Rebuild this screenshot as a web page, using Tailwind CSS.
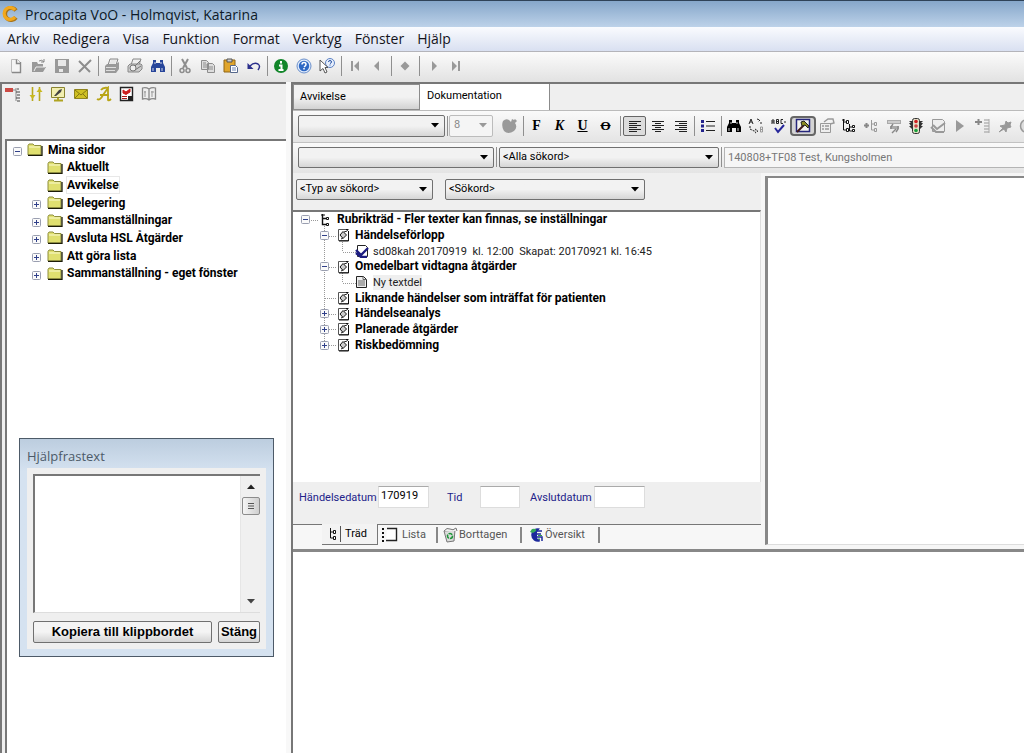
<!DOCTYPE html>
<html lang="sv">
<head>
<meta charset="utf-8">
<title>Procapita VoO - Holmqvist, Katarina</title>
<script src="https://cdn.jsdelivr.net/npm/@tailwindcss/browser@4"></script>
</head>
<body class="h-screen overflow-hidden flex flex-col bg-[#efefef] text-black text-[11px] font-[Roboto,'Liberation_Sans',sans-serif]">

<svg class="hidden">
  <symbol id="plus" viewBox="0 0 9 9"><rect x=".5" y=".5" width="8" height="8" rx="1" fill="#fafafa" stroke="#9a9fb0"/><path d="M2 4.500h5M4.500 2v5" stroke="#30408a"/></symbol>
  <symbol id="minus" viewBox="0 0 9 9"><rect x=".5" y=".5" width="8" height="8" rx="1" fill="#fafafa" stroke="#9a9fb0"/><path d="M2 4.500h5" stroke="#30408a"/></symbol>
  <symbol id="folder" viewBox="0 0 16 13"><path d="M1 12V2.500L2 1h4l1.500 1.500H14V12z" fill="#e0e070" stroke="#8f8f3c"/><path d="M2 4h11" stroke="#fafad0"/><path d="M1 12.500h14V3" fill="none" stroke="#1c1c08" stroke-width="1.300"/></symbol>
  <symbol id="heading" viewBox="0 0 13 14"><path d="M1.500 1.500h8l2 2v9h-10z" fill="#fff" stroke="#555"/><path d="M9 1.500h2.500M11.500 3v10H2" stroke="#111" fill="none"/><path d="M3 7l3-3.500L9.500 7 6 10.500z" fill="#ccc" stroke="#111"/><path d="M7 4l3-1M4 11l2-1" stroke="#222" fill="none"/></symbol>
  <symbol id="treeicon" viewBox="0 0 12 14"><path d="M2.500 1v10.500H6M2.500 5.500H6" fill="none" stroke="#111" stroke-width="1.400"/><path d="M1 2h4" stroke="#111"/><path d="M6.500 4.500h2v2h-2zM6.500 10.500h2v2h-2z" fill="#fff" stroke="#111"/></symbol>
  <symbol id="binoc" viewBox="0 0 16 16"><path d="M3 2h3v3h4V2h3v3l2 4v5h-5v-4H6v4H1V9l2-4z"/><path d="M3 10v3M12 10v3M5 4v2M11 4v2" stroke="#fff" stroke-width=".8"/></symbol>
  <symbol id="down" viewBox="0 0 8 5"><path d="M0 0h8L4 4.500z"/></symbol>
</svg>

<header class="h-[27px] shrink-0 flex items-center gap-[7px] pl-0.5 border-t border-[#2f4358] bg-linear-to-b from-[#86a7ca] to-[#bdd2e9]">
  <svg class="size-4" viewBox="0 0 16 16"><path d="M14 4.500A6 6 0 1 0 14 11.500" fill="none" stroke="#a8741a" stroke-width="4"/><path d="M13 4A6 6 0 1 0 13 11" fill="none" stroke="#f2a81d" stroke-width="3.200"/></svg>
  <h1 class="text-[14px] text-[#0d1a28] font-['Open_Sans','Noto_Sans',sans-serif]">Procapita VoO - Holmqvist, Katarina</h1>
</header>

<nav class="h-[25px] shrink-0 flex items-center gap-[13px] px-[7px] pb-0.5 text-[14px] text-[#14141c] font-['Open_Sans','Noto_Sans',sans-serif] bg-linear-to-b from-[#fafbfe] to-[#d9e0f1] border-b border-[#b4b4ba]">
  <button>Arkiv</button><button>Redigera</button><button>Visa</button><button>Funktion</button><button>Format</button><button>Verktyg</button><button>Fönster</button><button>Hjälp</button>
</nav>

<div role="toolbar" aria-label="Standard" class="h-[30px] shrink-0 flex items-center pl-1 pb-0.5 bg-linear-to-b from-[#fbfbfb] to-[#e2e2e2] [&_button]:w-[23px] [&_button]:flex [&_button]:justify-center [&_svg]:size-4 [&_i]:w-1 [&_i]:h-5 [&_i]:flex [&_i]:justify-center [&_i]:before:w-px [&_i]:before:bg-[#8f8f8f]">
  <button aria-label="Ny"><svg viewBox="0 0 16 16"><path d="M3.500 1.500h6l3 3v10h-9z" fill="#f4f4f4" stroke="#bbb"/><path d="M8.500 1.500v4h4M12.500 4v10.500H4" fill="none" stroke="#888" stroke-width="1.400"/></svg></button>
  <button aria-label="Öppna"><svg viewBox="0 0 16 16"><path d="M1 14V4h5l1 2h5v3h3l-3 5z" fill="#999"/><path d="M3 13l2-4h9" stroke="#eee" fill="none"/><path d="M8 3q3-2 5 1M13 1v3h-3" stroke="#888" fill="none"/></svg></button>
  <button aria-label="Spara"><svg viewBox="0 0 16 16"><path d="M1 1h14v14H1z" fill="#999"/><path d="M4 2h8v6H4zM5 11h6v3H5z" fill="#e8e8e8"/><path d="M9 11h2v3H9z" fill="#999"/></svg></button>
  <button aria-label="Ta bort"><svg viewBox="0 0 16 16"><path d="M2 3l11 11M14 2L2 14" stroke="#8d8d8d" stroke-width="2"/></svg></button>
  <i></i>
  <button aria-label="Skriv ut"><svg viewBox="0 0 16 16"><path d="M4 7l2-6h8l-2 6" fill="#eee" stroke="#888"/><path d="M1 8l2-2h9l3-2v7l-3 4H1z" fill="#999"/><path d="M2 9.500h10M7 3h5M6 5h5M2 12.500h9" stroke="#ddd"/></svg></button>
  <button aria-label="Förhandsgranska"><svg viewBox="0 0 16 16"><path d="M4 7l2-6h8l-2 6" fill="#eee" stroke="#888"/><path d="M1 8l2-2h11l1 1v4l-3 3H1z" fill="#ccc" stroke="#888"/><circle cx="6" cy="10" r="3" fill="#eee" stroke="#777"/><path d="M8 8l5-5M8 12l6-4" stroke="#777"/></svg></button>
  <button aria-label="Sök"><svg viewBox="0 0 16 16" fill="#27459a"><use href="#binoc"/></svg></button>
  <i></i>
  <button aria-label="Klipp ut"><svg viewBox="0 0 16 16"><path d="M5 1l5 9M11 1L6 10" stroke="#8d8d8d" stroke-width="2"/><circle cx="5" cy="12.500" r="2" fill="none" stroke="#8d8d8d" stroke-width="1.500"/><circle cx="11" cy="12.500" r="2" fill="none" stroke="#8d8d8d" stroke-width="1.500"/></svg></button>
  <button aria-label="Kopiera"><svg viewBox="0 0 16 16"><path d="M1.500 2.500h5l2 2v7h-7zM7.500 5.500h5l2 2v7h-7z" fill="#ddd" stroke="#8d8d8d"/><path d="M3 5h3M3 7h4M3 9h4M9 9h4M9 11h4" stroke="#8d8d8d"/></svg></button>
  <button aria-label="Klistra in"><svg viewBox="0 0 16 16"><path d="M1 2h11v12H1z" fill="#e0a52c" stroke="#8f6414"/><path d="M4 1h5v3H4z" fill="#ccc" stroke="#555"/><path d="M7.500 7.500h5l2 2v5h-7z" fill="#fff" stroke="#56688c"/><path d="M9 10h4M9 12h4" stroke="#6f86b5"/></svg></button>
  <button aria-label="Ångra"><svg viewBox="0 0 16 16"><path d="M4 8q4-4 8-2 3 2 0 6" fill="none" stroke="#2b2f8c" stroke-width="1.500"/><path d="M1.500 5v6h6z" fill="#2b2f8c"/></svg></button>
  <i></i>
  <button aria-label="Information"><svg viewBox="0 0 16 16"><circle cx="8" cy="8" r="7" fill="#12862a"/><path d="M8 3v2.500M6 7.500h2.500V12M5.500 12h5" stroke="#fff" stroke-width="2" fill="none"/></svg></button>
  <button aria-label="Hjälp"><svg viewBox="0 0 16 16"><circle cx="8" cy="8" r="7" fill="#dfeafa" stroke="#6b90cc"/><circle cx="8" cy="8" r="5.200" fill="#2e68c4"/><path d="M6 6.500q0-2 2-2t2 2q0 1-2 2.500M8 10v1.600" stroke="#fff" stroke-width="1.500" fill="none"/></svg></button>
  <button aria-label="Vad är det här?"><svg viewBox="0 0 16 16"><circle cx="11" cy="5" r="4.500" fill="#e6eefc" stroke="#5b81c4"/><path d="M9.500 4q0-1.500 1.500-1.500T12.500 4q0 1-1.500 1.500M11 6.500v1" stroke="#224fa0" fill="none"/><path d="M1 2v11l3-2.500 2 4.500 2-1-2-4.500h3z" fill="#fff" stroke="#555"/></svg></button>
  <div class="flex items-center [&_button]:w-[22px]! [&_i]:w-1.5!">
    <i></i>
    <button aria-label="Första"><svg viewBox="0 0 16 16" fill="#999"><path d="M4 3h2v10H4zM12 3v10L7 8z"/></svg></button>
    <button aria-label="Föregående"><svg viewBox="0 0 16 16" fill="#999"><path d="M10 3v10L5 8z"/></svg></button>
    <i></i>
    <button aria-label="Aktuell"><svg viewBox="0 0 16 16" fill="#999"><path d="M8 3.500L12.500 8 8 12.500 3.500 8z"/></svg></button>
    <i></i>
    <button aria-label="Nästa"><svg viewBox="0 0 16 16" fill="#999"><path d="M7 3v10l5-5z"/></svg></button>
    <button aria-label="Sista"><svg viewBox="0 0 16 16" fill="#999"><path d="M5 3v10l5-5zM11 3h2v10h-2z"/></svg></button>
  </div>
</div>

<div class="flex-1 min-h-0 flex">
  <!-- Navigation pane -->
  <aside class="relative w-[286px] shrink-0 flex flex-col border-t-2 border-l-2 border-[#777]">
    <div class="h-[55px] w-[158px] shrink-0 pt-0.5 flex items-start [&_button]:flex-1 [&_button]:flex [&_button]:justify-center [&_svg]:size-4">
      <button aria-label="Trädvy"><svg viewBox="0 0 16 16"><path d="M0 2h8v4H0z" fill="#cc4a44"/><path d="M8 4h3M11 2v13" stroke="#888" fill="none"/><path d="M12 3h2M11 6h4M12 9h3M11 12h4M12 15h3" stroke="#444" fill="none"/></svg></button>
      <button aria-label="Inställningar"><svg viewBox="0 0 16 16"><path d="M4.500 1v14M11.500 1v14" stroke="#b8a81c" stroke-width="1.600"/><path d="M1.500 9h6l-3 4zM8.500 6h6l-3-4z" fill="#c9b91f"/></svg></button>
      <button aria-label="Skärm"><svg viewBox="0 0 16 16"><path d="M1.500 1.500h13v10h-13z" fill="#f2efb0" stroke="#8a8430"/><path d="M4 10l5-6 3-1-1 3-5 4z" fill="#444"/><path d="M8 12v2M4 14.500h9" stroke="#b0a420" stroke-width="2"/></svg></button>
      <button aria-label="Meddelanden"><svg viewBox="0 0 16 16"><path d="M1.500 3.500h13v9h-13z" fill="#cfc022" stroke="#8f8420"/><path d="M2 4l6 5 6-5M2 12l4-4M14 12l-4-4" stroke="#85780f" fill="none"/></svg></button>
      <button aria-label="Teckensnitt"><svg viewBox="0 0 16 16"><path d="M1 13q3 2 6-4l5-7v12q1 1 3-1M4 9h9M5 4q2-3 7-2" fill="none" stroke="#b8a416" stroke-width="1.800"/></svg></button>
      <button aria-label="Uppgifter"><svg viewBox="0 0 16 16"><path d="M2.500 1.500h12v13h-12z" fill="#fff" stroke="#222" stroke-width="1.400"/><path d="M5 4l3 2 4-3v3L8 8.500 5 7z" fill="#cc1c1c" stroke="#cc1c1c"/><path d="M4 10.500h5M4 12.500h5" stroke="#b01818"/><path d="M10 10h4v4h-4z" fill="#222"/></svg></button>
      <button aria-label="Bok"><svg viewBox="0 0 16 16"><path d="M8 3Q5 1 1.500 2v11q4-1 6.500 1 2.500-2 6.500-1V2Q11 1 8 3v11" fill="#eee" stroke="#888" stroke-width="1.300"/><path d="M4 5v6M3 6h2M11 5v6M10 6h3" stroke="#999"/></svg></button>
    </div>
    <div class="flex-1 ml-[3px] border-t-2 border-l-2 border-[#777] bg-white">
      <ul class="h-[141px] grid grid-rows-8 pl-1.5 text-[12px] font-bold [&_li]:flex [&_li]:items-center [&_.box]:size-[9px] [&_.box]:mt-1 [&_.fold]:w-4 [&_.fold]:h-[13px] [&_span]:leading-4">
        <li class="gap-[5px]"><svg class="box"><use href="#minus"/></svg><svg class="fold"><use href="#folder"/></svg><span>Mina sidor</span></li>
        <li class="gap-1 pl-[34px]"><svg class="fold"><use href="#folder"/></svg><span>Aktuellt</span></li>
        <li class="gap-1 pl-[34px]"><svg class="fold"><use href="#folder"/></svg><span class="outline-1 outline-[#e8e8e8]">Avvikelse</span></li>
        <li class="pl-[19px]"><svg class="box mr-1.5"><use href="#plus"/></svg><svg class="fold mr-1"><use href="#folder"/></svg><span>Delegering</span></li>
        <li class="pl-[19px]"><svg class="box mr-1.5"><use href="#plus"/></svg><svg class="fold mr-1"><use href="#folder"/></svg><span>Sammanställningar</span></li>
        <li class="pl-[19px]"><svg class="box mr-1.5"><use href="#plus"/></svg><svg class="fold mr-1"><use href="#folder"/></svg><span>Avsluta HSL Åtgärder</span></li>
        <li class="pl-[19px]"><svg class="box mr-1.5"><use href="#plus"/></svg><svg class="fold mr-1"><use href="#folder"/></svg><span>Att göra lista</span></li>
        <li class="pl-[19px]"><svg class="box mr-1.5"><use href="#plus"/></svg><svg class="fold mr-1"><use href="#folder"/></svg><span>Sammanställning - eget fönster</span></li>
      </ul>
    </div>

    <!-- Floating phrase helper window -->
    <section class="absolute left-[17px] top-[354px] w-[255px] h-[219px] flex flex-col border border-[#4d5a68] bg-linear-to-b from-[#bccddf] via-[#d5e2f0] via-15% to-[#d5e2f0] px-[7px] pb-[7px]">
      <h2 class="h-[29px] shrink-0 pt-2 text-[13px] text-[#4c5a68] font-['Open_Sans','Noto_Sans',sans-serif]">Hjälpfrastext</h2>
      <div class="flex-1 flex flex-col gap-2 bg-[#efefef] px-1.5 pt-1.5 pb-1.5">
        <div class="flex-1 flex border-t-2 border-l-2 border-t-[#777] border-l-[#777] border-b border-b-[#ddd] bg-white">
          <textarea aria-label="Hjälpfrastext" class="flex-1 min-w-0 resize-none outline-none bg-white"></textarea>
          <div class="w-5 bg-[#f0f0f0] flex flex-col items-center border-l border-[#e6e6e6]">
            <svg class="w-2 h-[5px] mt-2 rotate-180" fill="#222"><use href="#down"/></svg>
            <div class="mt-2 size-[18px] border border-[#8c8c8c] rounded-xs bg-linear-to-r from-[#f5f5f5] to-[#cfcfcf] flex items-center justify-center"><svg class="size-2" viewBox="0 0 8 8"><path d="M1 1.500h6M1 4h6M1 6.500h6" stroke="#555"/></svg></div>
            <svg class="w-2 h-[5px] mt-auto mb-2" fill="#444"><use href="#down"/></svg>
          </div>
        </div>
        <div class="flex justify-between h-[22px] text-[13px] font-bold font-['Liberation_Sans',sans-serif]">
          <button class="w-[179px] rounded-xs border border-[#707070] bg-linear-to-b from-[#f4f4f4] from-50% to-[#d4d4d4]">Kopiera till klippbordet</button>
          <button class="w-[42px] rounded-xs border border-[#707070] bg-linear-to-b from-[#f4f4f4] from-50% to-[#d4d4d4]">Stäng</button>
        </div>
      </div>
    </section>
  </aside>
  <div class="w-[5px] shrink-0 bg-[#f8f8f8]"></div>

  <!-- Document pane -->
  <main class="flex-1 min-w-0 flex flex-col border-t-2 border-l-2 border-[#777]">
    <div role="tablist" class="h-[27px] shrink-0 flex items-end border-b border-[#bbb]">
      <button role="tab" class="h-[26px] w-[127px] pl-1.5 text-left border border-[#8b8b8b] bg-linear-to-b from-[#f2f2f2] from-50% to-[#d2d2d2]">Avvikelse</button>
      <button role="tab" aria-selected="true" class="h-[26px] w-[130px] pl-[7px] pb-0.5 text-left bg-white border-r border-[#8b8b8b]">Dokumentation</button>
    </div>

    <div role="toolbar" aria-label="Format" class="h-[32px] shrink-0 flex items-center overflow-hidden pl-[5px] pb-0.5 bg-linear-to-b from-[#fafafa] to-[#e4e4e4] border-b border-[#c2c2c2] [&_button]:h-5 [&_button]:flex [&_button]:items-center [&_button]:justify-center [&_button]:shrink-0 [&_button]:w-[23px] [&_button>svg]:size-4 [&_i]:shrink-0 [&_i]:w-1 [&_i]:h-5 [&_i]:flex [&_i]:justify-center [&_i]:before:w-px [&_i]:before:bg-[#8f8f8f]">
      <div class="grid w-[147px] shrink-0 items-center"><select aria-label="Teckensnitt" class="col-start-1 row-start-1 h-[22px] appearance-none border border-[#707070] rounded-xs bg-linear-to-b from-[#f2f2f2] from-50% to-[#d6d6d6]"><option></option></select><svg class="col-start-1 row-start-1 justify-self-end mr-1.5 w-2 h-[5px] pointer-events-none"><use href="#down"/></svg></div>
      <i></i>
      <div class="grid w-[44px] shrink-0 items-center"><select disabled aria-label="Storlek" class="col-start-1 row-start-1 h-[22px] pl-1 appearance-none border border-[#bcbcbc] rounded-xs bg-[#f5f5f5] text-[#8a8a8a]"><option>8</option></select><svg class="col-start-1 row-start-1 justify-self-end mr-1.5 w-2 h-[5px] pointer-events-none" fill="#999"><use href="#down"/></svg></div>
      <button aria-label="Färg" class="ml-[5px]"><svg viewBox="0 0 16 16"><path d="M1 3q3-3 6-1l2 2 1-3 2 1 1-1 2 2-2 2q3 4-1 8-6 4-10 0Q-1 8 1 3z" fill="#9a9a9a"/></svg></button>
      <i></i>
      <button class="font-['Liberation_Serif',serif] font-bold text-[14px]">F</button>
      <button class="font-['Liberation_Serif',serif] font-bold italic text-[14px]">K</button>
      <button class="font-['Liberation_Serif',serif] font-bold underline text-[14px]">U</button>
      <button class="font-['Liberation_Serif',serif] font-bold line-through text-[13px]">O</button>
      <i class="w-1.5!"></i>
      <button aria-label="Vänsterjustera" aria-pressed="true" class="border border-[#666] rounded-xs bg-[#dcdcdc]"><svg viewBox="0 0 16 16"><path d="M2 3.500h12M2 5.500h8M2 7.500h12M2 9.500h8M2 11.500h12M2 13.500h8" stroke="#222"/></svg></button>
      <button aria-label="Centrera"><svg viewBox="0 0 16 16"><path d="M2 3.500h12M5 5.500h6M2 7.500h12M5 9.500h6M2 11.500h12M5 13.500h6" stroke="#222"/></svg></button>
      <button aria-label="Högerjustera"><svg viewBox="0 0 16 16"><path d="M2 3.500h12M6 5.500h8M2 7.500h12M6 9.500h8M2 11.500h12M6 13.500h8" stroke="#222"/></svg></button>
      <i></i>
      <button aria-label="Punktlista"><svg viewBox="0 0 16 16"><path d="M1 2h3v3H1zM1 6.500h3v3H1zM1 11h3v3H1z" fill="#22228c"/><path d="M6 3.500h9M6 8h9M6 12.500h9" stroke="#222"/></svg></button>
      <i></i>
      <div class="w-[315px] shrink-0 flex [&>button]:flex-1">
        <button aria-label="Sök"><svg viewBox="0 0 16 16"><use href="#binoc"/></svg></button>
        <button aria-label="Ersätt"><svg viewBox="0 0 16 16"><path d="M1 6l2-5 2 5M2 4h2" stroke="#222" fill="none"/><path d="M9 1l3 1-2 2M13 4v3M2 8v3l4 2h2M7 11l3 2-3 2" stroke="#222" stroke-dasharray="2 1" fill="none"/><path d="M12.500 9v5h2v-5zM12.500 11.500h2" stroke="#999" fill="none"/></svg></button>
        <button aria-label="Stavning"><svg viewBox="0 0 16 16"><path d="M1 6V2h2v4M1 4h2M5.500 1.500h2v4h-2zM5.500 3.500h2M12 1.500h-2v4h2M14 3v2" stroke="#222" fill="none"/><path d="M4 10l3 4 6-7" stroke="#26269a" stroke-width="2" fill="none"/></svg></button>
        <button aria-label="Verktyg" aria-pressed="true" class="border-2 border-[#666] rounded-sm bg-[#d4d4d4]"><svg viewBox="0 0 16 16"><path d="M1.500 1.500h13v12h-13z" fill="#f4f4ee" stroke="#26267c" stroke-width="1.500"/><path d="M2 14l7-7" stroke="#401818" stroke-width="2"/><path d="M6 4l3-1 5 5-1 2-3-3-3 1z" fill="#8c8c22" stroke="#222"/></svg></button>
        <button aria-label="Egenskaper"><svg viewBox="0 0 16 16"><path d="M1.500 5.500h10v9h-10z" fill="#eee" stroke="#999"/><path d="M3 8h2M6 8h4M3 11h2M6 11h4M5 4l4-3h5l1 4-4 1" stroke="#999" fill="none" stroke-width="1.400"/></svg></button>
        <button aria-label="Träd"><svg viewBox="0 0 16 16"><path d="M2.500 1v11H5M2.500 4H5M8.500 6v7H11M8.500 9H11" fill="none" stroke="#111"/><path d="M5.500 2.500h2v3h-2zM5.500 10.500h2v3h-2zM11.500 7.500h2v2h-2zM11.500 11.500h2v2h-2zM1 2h3" fill="#fff" stroke="#111"/></svg></button>
        <button aria-label="Lägg till gren"><svg viewBox="0 0 16 16"><path d="M1 7.500h5M3.500 5v5" stroke="#888" stroke-width="2"/><path d="M8.500 2v10H11M8.500 6H11M11.500 4.500h2v3h-2zM11.500 10.500h2v3h-2z" fill="none" stroke="#999"/></svg></button>
        <button aria-label="Skriv ut"><svg viewBox="0 0 16 16"><path d="M1 2h14v4H1zM4 8h9v3H4z" fill="#aaa"/><path d="M2 4h12" stroke="#eee"/><path d="M7 6l-2 3v2M10 11l-4 4M12 8v3l-2 3" stroke="#888" stroke-width="1.400" fill="none"/></svg></button>
        <button aria-label="Trafikljus"><svg viewBox="0 0 16 16"><path d="M1 3h14l-2 2h2l-2 3h2l-3 3H4L1 8h2L1 5h2z" fill="#333"/><rect x="4.500" y=".5" width="7" height="15" rx="2" fill="#e4e0c8" stroke="#333"/><circle cx="8" cy="3.500" r="1.800" fill="#d02020"/><circle cx="8" cy="8" r="1.800" fill="#c44"/><circle cx="8" cy="12.500" r="1.800" fill="#17a03c"/></svg></button>
        <button aria-label="Signera"><svg viewBox="0 0 16 16"><path d="M2.500 1.500h10l2 2v10h-12z" fill="#eee" stroke="#999"/><path d="M3 7l4 4 8-6M1 9l5 5h8" stroke="#999" stroke-width="2" fill="none"/></svg></button>
        <button aria-label="Kör"><svg viewBox="0 0 16 16"><path d="M4 2v12l8-6z" fill="#999"/></svg></button>
        <button aria-label="Lägg till rad"><svg viewBox="0 0 16 16"><path d="M0 4h7M3.500 1v6" stroke="#888" stroke-width="2"/><path d="M9 2h5M9 5h5M9 8h5M9 11h5M9 14h5" stroke="#999"/><path d="M14 1v14" stroke="#aaa"/></svg></button>
        <button aria-label="Fäst"><svg viewBox="0 0 16 16"><path d="M2 14l4-4-3-2 5-1 1-4 2 2 3-1-1 3 1 2-4 1-1 4-2-3z" fill="#999" stroke="#999"/></svg></button>
        <button aria-label="Tid"><svg viewBox="0 0 16 16"><circle cx="8" cy="8" r="6.500" fill="#ddd" stroke="#999" stroke-width="1.500"/><path d="M8 4v4l3 2" stroke="#999" fill="none"/></svg></button>
      </div>
    </div>

    <div class="h-[30px] shrink-0 flex items-center pl-[5px] pb-0.5 bg-linear-to-b from-[#fafafa] to-[#e4e4e4] [&_i]:shrink-0 [&_i]:w-[5px] [&_i]:h-5 [&_i]:flex [&_i]:justify-center [&_i]:before:w-px [&_i]:before:bg-[#8f8f8f]">
      <div class="grid w-[196px] shrink-0 items-center"><select aria-label="Mall" class="col-start-1 row-start-1 h-[21px] appearance-none border border-[#707070] rounded-xs bg-linear-to-b from-[#f2f2f2] from-50% to-[#d6d6d6]"><option></option></select><svg class="col-start-1 row-start-1 justify-self-end mr-1.5 w-2 h-[5px] pointer-events-none"><use href="#down"/></svg></div>
      <i></i>
      <div class="grid w-[220px] shrink-0 items-center"><select aria-label="Alla sökord" class="col-start-1 row-start-1 h-[21px] pl-[3px] appearance-none border border-[#707070] rounded-xs bg-linear-to-b from-[#f2f2f2] from-50% to-[#d6d6d6]"><option>&lt;Alla sökord&gt;</option></select><svg class="col-start-1 row-start-1 justify-self-end mr-1.5 w-2 h-[5px] pointer-events-none"><use href="#down"/></svg></div>
      <i></i>
      <input aria-label="Enhet" disabled value="140808+TF08 Test, Kungsholmen" class="flex-1 min-w-0 h-[21px] pl-[3px] border border-r-0 border-[#b4b4b4] bg-[#f6f6f6] text-[#777]">
    </div>

    <div class="h-[376px] shrink-0 flex bg-[#f6f6f6]">
      <div class="w-[468px] shrink-0 flex flex-col bg-[#efefef]">
        <div class="h-[37px] shrink-0 flex items-center pl-[3px] gap-3 pb-1">
          <div class="grid w-[137px] items-center"><select aria-label="Typ av sökord" class="col-start-1 row-start-1 h-[21px] pl-[3px] appearance-none border border-[#707070] rounded-xs bg-linear-to-b from-[#f2f2f2] from-50% to-[#d6d6d6]"><option>&lt;Typ av sökord&gt;</option></select><svg class="col-start-1 row-start-1 justify-self-end mr-1.5 w-2 h-[5px] pointer-events-none"><use href="#down"/></svg></div>
          <div class="grid w-[200px] items-center"><select aria-label="Sökord" class="col-start-1 row-start-1 h-[21px] pl-[3px] appearance-none border border-[#707070] rounded-xs bg-linear-to-b from-[#f2f2f2] from-50% to-[#d6d6d6]"><option>&lt;Sökord&gt;</option></select><svg class="col-start-1 row-start-1 justify-self-end mr-1.5 w-2 h-[5px] pointer-events-none"><use href="#down"/></svg></div>
        </div>

        <div class="relative flex-1 bg-white border-t-2 border-[#777] border-r border-r-[#ddd]">
          <svg class="absolute left-0 top-0 w-20 h-[141px]" viewBox="0 0 80 141"><path d="M12 8.500h14M31.500 14v119M32 24.500h12M32 55.500h12M32 86.500h12M32 102.500h12M32 117.500h12M32 133.500h12M49.500 30v10M50 40.500h14M49.500 61v10M50 71.500h14" fill="none" stroke="#999" stroke-dasharray="1 1"/></svg>
          <ul class="relative h-[141px] grid grid-rows-9 [&_li]:flex [&_li]:items-center [&_li]:whitespace-pre [&_span]:leading-[15px] [&_.head]:font-bold [&_.head]:text-[12px] [&_.box]:size-[9px] [&_.box]:mr-2 [&_.doc]:w-[13px] [&_.doc]:h-[14px] [&_.doc]:mr-[5px]">
            <li class="head pl-2"><svg class="box mr-2.5!"><use href="#minus"/></svg><svg class="w-3 h-3.5 mr-[5px]"><use href="#treeicon"/></svg><span>Rubrikträd - Fler texter kan finnas, se inställningar</span></li>
            <li class="head pl-[27px]"><svg class="box"><use href="#minus"/></svg><svg class="doc"><use href="#heading"/></svg><span>Händelseförlopp</span></li>
            <li class="pl-[62px] text-[#222]"><svg class="w-3.5 h-3.5 mr-1" viewBox="0 0 14 14"><path d="M2.500 1.500h8l2 2v9h-10z" fill="#fff" stroke="#222"/><path d="M1 6l5 5 7-7M1 9l5 4h6" stroke="#1c1c80" stroke-width="2.400" fill="none"/></svg><span>sd08kah 20170919  kl. 12:00  Skapat: 20170921 kl. 16:45</span></li>
            <li class="head pl-[27px]"><svg class="box"><use href="#minus"/></svg><svg class="doc"><use href="#heading"/></svg><span>Omedelbart vidtagna åtgärder</span></li>
            <li class="pl-[62px] text-[#222]"><svg class="w-3.5 h-3.5 mr-1" viewBox="0 0 14 14"><path d="M1.500 1.500h7l3 3v8h-10z" fill="#eee" stroke="#222"/><path d="M8 1.500v3h3.500M3 6h7M3 8h7M3 10h7" stroke="#666" fill="none"/></svg><span class="bg-[#efefef]">Ny textdel</span></li>
            <li class="head pl-[44px]"><svg class="doc"><use href="#heading"/></svg><span>Liknande händelser som inträffat för patienten</span></li>
            <li class="head pl-[27px]"><svg class="box"><use href="#plus"/></svg><svg class="doc"><use href="#heading"/></svg><span>Händelseanalys</span></li>
            <li class="head pl-[27px]"><svg class="box"><use href="#plus"/></svg><svg class="doc"><use href="#heading"/></svg><span>Planerade åtgärder</span></li>
            <li class="head pl-[27px]"><svg class="box"><use href="#plus"/></svg><svg class="doc"><use href="#heading"/></svg><span>Riskbedömning</span></li>
          </ul>
        </div>

        <form class="h-[42px] shrink-0 flex items-start pt-1 pl-1.5 text-[#22228a] [&_label]:pt-1 [&_input]:h-[22px] [&_input]:bg-white [&_input]:border [&_input]:border-[#ddd] [&_input]:border-t-[#aaa] [&_input]:text-black [&_input]:px-0.5 [&_input]:pb-1">
          <label for="hd" class="w-[79px]">Händelsedatum</label><input id="hd" value="170919" class="w-[51px]">
          <label for="tid" class="ml-[18px] w-[33px]">Tid</label><input id="tid" class="w-[40px]">
          <label for="ad" class="ml-2.5 w-[64px]">Avslutdatum</label><input id="ad" class="w-[51px]">
        </form>
        <div role="tablist" class="h-[25px] shrink-0 flex items-start bg-[#f7f7f7] border-t border-[#777] pl-[29px] text-[#555] [&_button]:flex [&_button]:items-center">
          <button role="tab" aria-selected="true" class="-mt-px h-[21px] w-[56px] pl-1.5 bg-[#f3f3f3] text-black border-r border-b border-[#777]"><svg class="w-3 h-3.5" viewBox="0 0 12 14"><path d="M2.500 1v10H5M2.500 5H5" fill="none" stroke="#111"/><path d="M5.500 3.500h2v3h-2zM5.500 9.500h2v3h-2z" fill="#fff" stroke="#111"/></svg><span class="border-l border-[#555] pl-1">Träd</span></button>
          <button role="tab" class="mt-0.5 h-4 w-[58px] pl-1 gap-1"><svg class="size-4" viewBox="0 0 16 16"><path d="M1 1v2M1 5v2M1 9v2M1 13v2" stroke="#111" stroke-width="2"/><path d="M5 1.500h9.500v12H4" fill="#fff" stroke="#222" stroke-width="1.400"/></svg>Lista</button>
          <button role="tab" class="mt-0.5 h-4 w-[84px] pl-1 gap-px border-l-2 border-[#888]"><svg class="size-4" viewBox="0 0 16 16"><path d="M2 4l11-1-1 11-7 1z" fill="#dcdcdc" stroke="#777"/><path d="M2 4q3-4 6-2t6-1l1 3" fill="#eee" stroke="#777"/><circle cx="8" cy="9" r="2.500" fill="none" stroke="#1d9438" stroke-width="1.600" stroke-dasharray="4 1"/></svg>Borttagen</button>
          <button role="tab" class="mt-0.5 h-4 w-[80px] pl-1.5 gap-px border-l-2 border-r-2 border-[#888]"><svg class="size-4" viewBox="0 0 16 16"><path d="M12 1.500A6.800 6.800 0 1 0 12 14.500L9 11V5z" fill="#1c2a9c"/><path d="M4 2q5-1 4 2L5 6 2 5z" fill="#35a85a"/><path d="M9 4h5M9 7h4M9 10h5v4M8 13h4" stroke="#1c2a9c" stroke-width="1.500" fill="none"/><path d="M10 8.500h4M10 12h2" stroke="#2a9a48"/></svg>Översikt</button>
        </div>
      </div>
      <div class="w-1 shrink-0"></div>
      <div class="flex-1 mt-[3px] mb-1 bg-white border-l-[3px] border-t-2 border-b border-[#888] border-b-[#ddd]"></div>
    </div>
    <section aria-label="Text" class="flex-1 border-t-[3px] border-[#888] bg-white"></section>
  </main>
</div>
</body>
</html>
